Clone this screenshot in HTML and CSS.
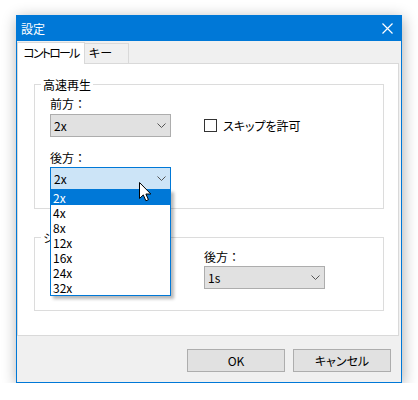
FILE: index.html
```html
<!DOCTYPE html>
<html lang="ja">
<head>
<meta charset="utf-8">
<link rel="stylesheet" href="styles.css">
</head>
<body>
<div class="window">
  <div class="titlebar">
    <span class="title">設定</span>
    <svg class="close" width="11" height="11" viewBox="0 0 11 11"><path d="M0.5 0.5 L10.5 10.5 M10.5 0.5 L0.5 10.5" stroke="#fff" stroke-width="1.2" fill="none"/></svg>
  </div>
  <div class="tabs">
    <div class="tab active">コントロール</div>
    <div class="tab">キー</div>
  </div>
  <div class="panel">
    <fieldset class="group g1">
      <legend>高速再生</legend>
      <div class="grid">
        <div class="label first">前方：</div>
        <div></div>
        <div class="combo"><span>2x</span><svg class="chev" width="9" height="5" viewBox="0 0 9 5"><polyline points="0.5,0.5 4.5,4.5 8.5,0.5" fill="none" stroke="#555" stroke-width="1"/></svg></div>
        <label class="check"><span class="box"></span><span class="kana">スキップを許可</span></label>
        <div class="label second">後方：</div>
        <div></div>
        <div class="combo focus"><span>2x</span><svg class="chev" width="9" height="5" viewBox="0 0 9 5"><polyline points="0.5,0.5 4.5,4.5 8.5,0.5" fill="none" stroke="#555" stroke-width="1"/></svg>
          <ul class="list">
            <li class="sel">2x</li>
            <li>4x</li>
            <li>8x</li>
            <li>12x</li>
            <li>16x</li>
            <li>24x</li>
            <li>32x</li>
          </ul>
          <svg class="cursor" width="13" height="20" viewBox="0 0 13 20"><path d="M0.5 0.5 L0.5 16.5 L4.3 12.9 L6.9 18.8 L9.4 17.7 L6.9 12 L11.8 12 Z" fill="#fff" stroke="#000" stroke-width="1" stroke-linejoin="miter"/></svg>
        </div>
      </div>
    </fieldset>
    <fieldset class="group g2">
      <legend>シーク</legend>
      <div class="grid">
        <div class="slot"></div>
        <div class="label">後方：</div>
        <div class="slot"></div>
        <div class="combo"><span>1s</span><svg class="chev" width="9" height="5" viewBox="0 0 9 5"><polyline points="0.5,0.5 4.5,4.5 8.5,0.5" fill="none" stroke="#555" stroke-width="1"/></svg></div>
      </div>
    </fieldset>
  </div>
  <div class="buttons">
    <button class="btn">OK</button>
    <button class="btn kana">キャンセル</button>
  </div>
</div>
</body>
</html>
```
FILE: styles.css
```css
* { box-sizing: border-box; }

body {
  margin: 0;
  background: #fff;
  font-family: "Noto Sans CJK JP", sans-serif;
  font-size: 12px;
  color: #000;
}

.kana {
  font-feature-settings: "palt";
}

.window {
  margin: 15px 0 0 16px;
  width: 386px;
  height: 368px;
  border: 1px solid #0078d7;
  background: #f0f0f0;
  box-shadow: 1px 3px 14px rgba(0, 0, 0, 0.32);
  display: flex;
  flex-direction: column;
}

.titlebar {
  flex: none;
  height: 25px;
  background: #0078d7;
  color: #fff;
  display: flex;
  align-items: center;
  padding-left: 4px;
  line-height: 25px;
}

.close {
  margin-left: auto;
  margin-right: 8px;
}

.tabs {
  flex: none;
  height: 22px;
  padding-top: 1px;
  display: flex;
  align-items: flex-end;
}

.tab {
  height: 20px;
  width: 45px;
  margin-left: -1px;
  padding-left: 4px;
  border: 1px solid #d9d9d9;
  border-bottom: none;
  background: #f0f0f0;
  line-height: 18px;
  white-space: nowrap;
  font-feature-settings: "palt";
}

.tab.active {
  position: relative;
  z-index: 2;
  height: 22px;
  width: 68px;
  margin-left: 0;
  margin-bottom: -1px;
  padding-left: 0;
  background: #fff;
  text-align: center;
  line-height: 19px;
  letter-spacing: -1.8px;
}

.panel {
  flex: none;
  height: 273px;
  margin-right: 2px;
  border: 1px solid #d9d9d9;
  background: #fff;
  padding: 0 14px 0 16px;
}

.group {
  margin: 0;
  padding: 0;
  min-inline-size: 0;
  border: 1px solid #dcdcdc;
}

.group legend {
  margin-left: 6px;
  padding: 0 2px;
  line-height: 17px;
}

.g1 { margin-top: 12px; }
.g1 .grid { padding: 2px 0 18px 15px; }
.g2 { margin-top: 20px; }
.g2 .grid { padding: 2px 0 21px 15px; }

.grid {
  display: grid;
  grid-template-columns: 121px 1fr;
  column-gap: 33px;
  align-items: center;
}

.g2 .grid { grid-template-columns: 121px 121px; }

.label {
  line-height: 17px;
  margin-bottom: 1px;
}
.label.first { margin-bottom: 2px; }
.label.second { margin-top: 12px; }

.combo {
  position: relative;
  height: 23px;
  border: 1px solid #adadad;
  background: #e1e1e1;
  display: flex;
  align-items: center;
  justify-content: space-between;
  padding: 0 4px 0 3px;
}

.combo.focus {
  background: #cce4f7;
  border-color: #0078d7;
}

.check {
  display: flex;
  align-items: center;
  gap: 6px;
}

.box {
  width: 13px;
  height: 13px;
  border: 1px solid #333;
  background: #fff;
}

.list {
  position: absolute;
  left: -1px;
  top: 100%;
  width: 121px;
  margin: 0;
  padding: 0;
  list-style: none;
  background: #fff;
  border: 1px solid #0078d7;
  box-shadow: 3px 3px 3px rgba(0, 0, 0, 0.28);
  z-index: 5;
}

.list li {
  height: 15px;
  line-height: 15px;
  padding-left: 2px;
}

.list li.sel {
  background: #0078d7;
  color: #fff;
}

.cursor {
  position: absolute;
  left: 88px;
  top: 14px;
  z-index: 6;
}

.buttons {
  flex: 1;
  display: flex;
  justify-content: flex-end;
  align-items: flex-start;
  gap: 8px;
  padding: 13px 10px 0 0;
}

.btn {
  width: 98px;
  height: 23px;
  border: 1px solid #adadad;
  background: #e1e1e1;
  font: inherit;
  color: #000;
  padding: 0;
}

.btn.kana {
  font-feature-settings: "palt";
}
```
